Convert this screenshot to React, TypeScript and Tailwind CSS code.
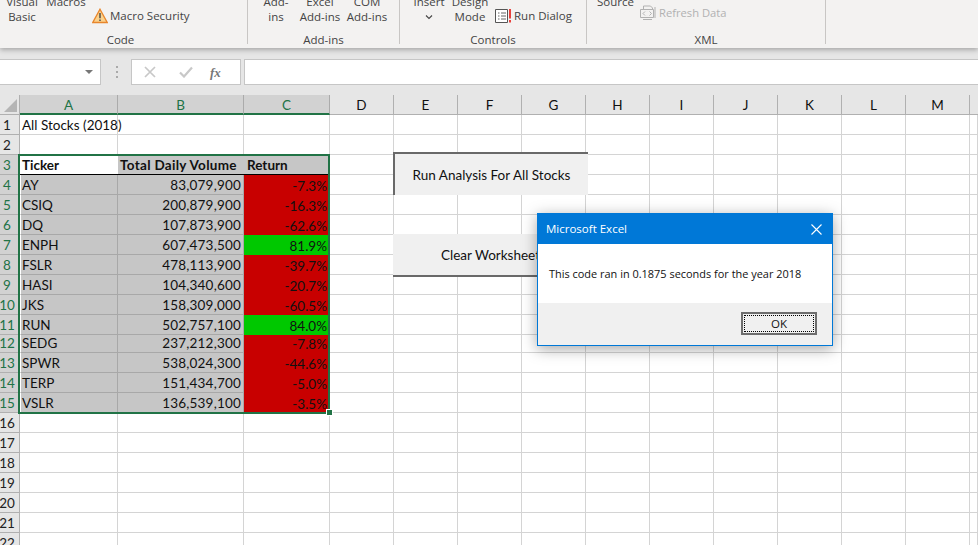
import React from 'react';

type Stock = { row: number; ticker: string; volume: string; ret: string; up?: boolean };

const stocks: Stock[] = [
  { row: 4, ticker: 'AY', volume: '83,079,900', ret: '-7.3%' },
  { row: 5, ticker: 'CSIQ', volume: '200,879,900', ret: '-16.3%' },
  { row: 6, ticker: 'DQ', volume: '107,873,900', ret: '-62.6%' },
  { row: 7, ticker: 'ENPH', volume: '607,473,500', ret: '81.9%', up: true },
  { row: 8, ticker: 'FSLR', volume: '478,113,900', ret: '-39.7%' },
  { row: 9, ticker: 'HASI', volume: '104,340,600', ret: '-20.7%' },
  { row: 10, ticker: 'JKS', volume: '158,309,000', ret: '-60.5%' },
  { row: 11, ticker: 'RUN', volume: '502,757,100', ret: '84.0%', up: true },
  { row: 12, ticker: 'SEDG', volume: '237,212,300', ret: '-7.8%' },
  { row: 13, ticker: 'SPWR', volume: '538,024,300', ret: '-44.6%' },
  { row: 14, ticker: 'TERP', volume: '151,434,700', ret: '-5.0%' },
  { row: 15, ticker: 'VSLR', volume: '136,539,100', ret: '-3.5%' },
];

const plainColumns = ['D', 'E', 'F', 'G', 'H', 'I', 'J', 'K', 'L', 'M'];

function Separator() {
  return <div className="w-px h-[44px] bg-[#c8c6c4] shrink-0" />;
}

function TallButton({ top, bottom, width }: { top: string; bottom: React.ReactNode; width: string }) {
  return (
    <div className={`${width} shrink-0 flex flex-col items-center leading-[15px] -mt-[6px] whitespace-nowrap`}>
      <span>{top}</span>
      <span>{bottom}</span>
    </div>
  );
}

function Ribbon() {
  return (
    <div className="relative z-10 h-[48px] bg-[#f3f2f1] shadow-[0_2px_5px_rgba(0,0,0,0.28)] flex overflow-hidden font-['Open_Sans',sans-serif] text-[11.5px] text-[#444]">
      <div className="w-[247px] shrink-0 flex flex-col">
        <div className="h-[34px] flex pl-[3px]">
          <TallButton top="Visual" bottom="Basic" width="w-[38px]" />
          <TallButton top="Macros" bottom="" width="w-[50px]" />
          <div className="flex items-start gap-[2px] mt-[8px] ml-[1px] whitespace-nowrap">
            <svg width="16" height="16" viewBox="0 0 16 16">
              <path d="M8 1.2 15.2 14.5H.8Z" fill="#fbd28c" stroke="#e8862c" strokeWidth="1.3" />
              <path d="M8 5v5.2M8 11.4v1.5" stroke="#444" strokeWidth="1.4" />
            </svg>
            <span className="leading-[16px]">Macro Security</span>
          </div>
        </div>
        <div className="text-center leading-[12px] pr-[6px]">Code</div>
      </div>
      <Separator />
      <div className="w-[151px] shrink-0 flex flex-col">
        <div className="h-[34px] flex pl-[8px]">
          <TallButton top="Add-" bottom="ins" width="w-[40px]" />
          <TallButton top="Excel" bottom="Add-ins" width="w-[48px]" />
          <TallButton top="COM" bottom="Add-ins" width="w-[46px]" />
        </div>
        <div className="text-center leading-[12px]">Add-ins</div>
      </div>
      <Separator />
      <div className="w-[186px] shrink-0 flex flex-col">
        <div className="h-[34px] flex pl-[8px]">
          <TallButton
            top="Insert"
            width="w-[42px]"
            bottom={
              <svg width="8" height="15" viewBox="0 0 8 15">
                <path d="M1 6.5 4 9.5 7 6.5" fill="none" stroke="#444" strokeWidth="1.1" />
              </svg>
            }
          />
          <TallButton top="Design" bottom="Mode" width="w-[40px]" />
          <div className="flex items-start gap-[2px] mt-[8px] ml-[5px] whitespace-nowrap">
            <svg width="17" height="16" viewBox="0 0 17 16">
              <path d="M.5 1.5h12v13H.5Z" fill="#fff" stroke="#555" />
              <path d="M3 5h1.5M6 5h5M3 8h1.5M6 8h5M3 11h1.5M6 11h5" stroke="#666" />
              <path d="M15 1v9.5M15 12v2.5" stroke="#e8413c" strokeWidth="2" />
            </svg>
            <span className="leading-[16px]">Run Dialog</span>
          </div>
        </div>
        <div className="text-center leading-[12px]">Controls</div>
      </div>
      <Separator />
      <div className="w-[238px] shrink-0 flex flex-col">
        <div className="h-[34px] flex pl-[10px]">
          <div className="-mt-[6px] w-[43px] leading-[15px]">Source</div>
          <div className="flex items-start gap-[3px] mt-[5px] whitespace-nowrap text-[#b1b1b1] text-[11.2px]">
            <svg width="16" height="16" viewBox="0 0 16 16" fill="none" stroke="#b1b1b1">
              <path d="M3.5 4V1h7l2 2v1M.5 4.5h13v8H.5ZM3 14.5h9" />
              <path d="M5 6.5 3 8.5l2 2M9.5 6.5l2 2-2 2M7 6.8v.1M7 10v.1" />
              <path d="M15 2v11" />
            </svg>
            <span className="leading-[16px]">Refresh Data</span>
          </div>
        </div>
        <div className="text-center leading-[12px]">XML</div>
      </div>
      <Separator />
    </div>
  );
}

function FormulaBar() {
  return (
    <div className="h-[47px] bg-[#e6e6e6] pt-[11px] flex items-start">
      <div className="w-[101px] h-[26px] bg-white border border-l-0 border-[#c6c6c6] flex items-center justify-end pr-[7px]">
        <div className="w-0 h-0 border-l-[4px] border-r-[4px] border-t-[4px] border-l-transparent border-r-transparent border-t-[#777]" />
      </div>
      <div className="w-[30px] h-[26px] flex flex-col items-center justify-center gap-[3px] pl-[2px]">
        <div className="w-[2px] h-[2px] bg-[#aaa]" />
        <div className="w-[2px] h-[2px] bg-[#aaa]" />
        <div className="w-[2px] h-[2px] bg-[#aaa]" />
      </div>
      <div className="w-[110px] h-[26px] bg-white border border-[#c6c6c6] flex items-center">
        <svg className="ml-[12px]" width="12" height="12" viewBox="0 0 12 12">
          <path d="M1 1l10 10M11 1 1 11" stroke="#c8c8c8" strokeWidth="1.7" />
        </svg>
        <svg className="ml-[23px]" width="14" height="12" viewBox="0 0 14 12">
          <path d="M1 6.5 5 10.5 13 1.5" fill="none" stroke="#c8c8c8" strokeWidth="2.2" />
        </svg>
        <span className="ml-[17px] font-['Liberation_Serif',serif] italic font-bold text-[13px] leading-none text-[#777]">fx</span>
      </div>
      <div className="flex-1 h-[26px] ml-[3px] bg-white border border-r-0 border-[#c6c6c6]" />
    </div>
  );
}

function RowHeader({ n, active }: { n: number; active?: boolean }) {
  return (
    <div
      className={`flex items-center justify-center pr-[5px] border-b border-r border-[#b0b0b0] overflow-visible ${
        n === 12 ? '' : 'pt-[2px]'
      } ${active ? 'bg-[#d2d2d2] text-[#217346]' : 'bg-[#e6e6e6] text-[#222]'}`}
    >
      {n}
    </div>
  );
}

function Gridline() {
  return <div className="border-r border-b border-[#d4d4d4] bg-white" />;
}

function Sheet() {
  const emptyRow = (n: number) => (
    <React.Fragment key={n}>
      <RowHeader n={n} />
      <Gridline />
      <Gridline />
      <Gridline />
      {plainColumns.map((c) => (
        <Gridline key={c} />
      ))}
      <Gridline />
    </React.Fragment>
  );

  const fillerCells = (row: number) =>
    plainColumns.concat('N').map((c) => <Gridline key={`${row}-${c}`} />);

  return (
    <div className="relative flex-1 overflow-hidden font-['Lato',sans-serif] text-[13.5px] text-[#111]">
      <div className="grid grid-cols-[20px_98px_126px_86px_repeat(10,64px)_1fr] grid-rows-[20px_repeat(11,20px)_18px_repeat(11,20px)]">
        {/* Column headers */}
        <div className="bg-[#e6e6e6] border-r border-b border-[#b0b0b0] flex items-end justify-end pr-[2px] pb-[2px]">
          <div className="w-0 h-0 border-l-[13px] border-b-[13px] border-l-transparent border-b-[#b5b5b5]" />
        </div>
        {['A', 'B', 'C'].map((c) => (
          <div key={c} className="bg-[#d2d2d2] text-[#217346] pt-[2px] border-r border-[#ababab] border-b-2 border-b-[#217346] flex items-center justify-center">
            {c}
          </div>
        ))}
        {plainColumns.map((c) => (
          <div key={c} className="bg-[#e6e6e6] pt-[2px] border-r border-b border-[#b0b0b0] flex items-center justify-center">
            {c}
          </div>
        ))}
        <div className="bg-[#e6e6e6] border-b border-[#b0b0b0]" />

        {/* Row 1 */}
        <RowHeader n={1} />
        <div className="border-r border-b border-[#d4d4d4] pl-[2px] pt-[2px] flex items-center whitespace-nowrap overflow-visible z-[1]">All Stocks (2018)</div>
        <Gridline />
        <Gridline />
        {fillerCells(1)}

        {/* Row 2 */}
        {emptyRow(2)}

        {/* Row 3 */}
        <RowHeader n={3} active />
        <div className="bg-white border-b border-black pl-[2px] pt-[2px] font-bold flex items-center">Ticker</div>
        <div className="bg-[#c6c6c6] border-b border-black pl-[2px] pt-[2px] font-bold tracking-[0.3px] flex items-center whitespace-nowrap">Total Daily Volume</div>
        <div className="bg-[#c6c6c6] border-b border-black pl-[3px] pt-[2px] font-bold flex items-center">Return</div>
        {fillerCells(3)}

        {/* Stock rows */}
        {stocks.map((s) => {
          const pad = s.row === 12 ? '' : 'pt-[2px]';
          return (
            <React.Fragment key={s.row}>
              <RowHeader n={s.row} active />
              <div className={`bg-[#c6c6c6] border-l border-white border-r border-r-[#a8a8a8] border-b border-b-[#a8a8a8] pl-[1px] flex items-center ${pad}`}>{s.ticker}</div>
              <div className={`bg-[#c6c6c6] border-r border-r-[#a8a8a8] border-b border-b-[#a8a8a8] pr-[2px] tracking-[0.2px] flex items-center justify-end ${pad}`}>{s.volume}</div>
              <div className={`pr-[3px] flex items-center justify-end ${pad} ${s.up ? 'bg-[#00c800]' : 'bg-[#c80000]'}`}>{s.ret}</div>
              {fillerCells(s.row)}
            </React.Fragment>
          );
        })}

        {[16, 17, 18, 19, 20, 21, 22].map(emptyRow)}
      </div>

      {/* Selection around A3:C15 */}
      <div className="absolute left-[18px] top-[59px] w-[312px] h-[260px] border-2 border-[#217346] pointer-events-none" />
      <div className="absolute left-[327px] top-[315px] w-[5px] h-[5px] bg-[#217346] outline outline-1 outline-white" />

      {/* Macro buttons on the sheet */}
      <div className="absolute left-[393px] top-[57px] w-[195px] h-[43px] pt-[2px] bg-[#f0f0f0] border-t-2 border-l-2 border-[#696969] flex items-center justify-center">
        Run Analysis For All Stocks
      </div>
      <div className="absolute left-[393px] top-[139px] w-[195px] h-[43px] pt-[2px] bg-[#f0f0f0] border-b-2 border-[#696969] flex items-center justify-center">
        Clear Worksheet
      </div>

      {/* Message box */}
      <div className="absolute left-[537px] top-[118px] w-[296px] h-[133px] bg-white border border-[#0078d7] shadow-[0_3px_14px_rgba(0,0,0,0.35)] flex flex-col font-['Open_Sans',sans-serif] text-[10.95px] text-[#111]">
        <div className="h-[30px] bg-[#0078d7] text-white text-[11.5px] flex items-center justify-between pl-[8px] pr-[10px]">
          <span>Microsoft Excel</span>
          <svg width="11" height="11" viewBox="0 0 11 11">
            <path d="M.5.5l10 10M10.5.5l-10 10" stroke="#fff" strokeWidth="1.1" />
          </svg>
        </div>
        <div className="h-[59px] pl-[11px] pt-[22px] leading-[16px]">This code ran in 0.1875 seconds for the year 2018</div>
        <div className="flex-1 bg-[#f0f0f0] flex justify-end items-start pt-[9px] pr-[15px]">
          <div className="w-[76px] h-[23px] border-2 border-[#6d6d6d] bg-[#f0f0f0] p-[1px]">
            <div className="w-full h-full border border-dotted border-black flex items-center justify-center leading-none text-[11.5px]">OK</div>
          </div>
        </div>
      </div>
    </div>
  );
}

export default function App() {
  return (
    <div className="w-[978px] h-[545px] overflow-hidden flex flex-col bg-white">
      <Ribbon />
      <FormulaBar />
      <Sheet />
    </div>
  );
}
